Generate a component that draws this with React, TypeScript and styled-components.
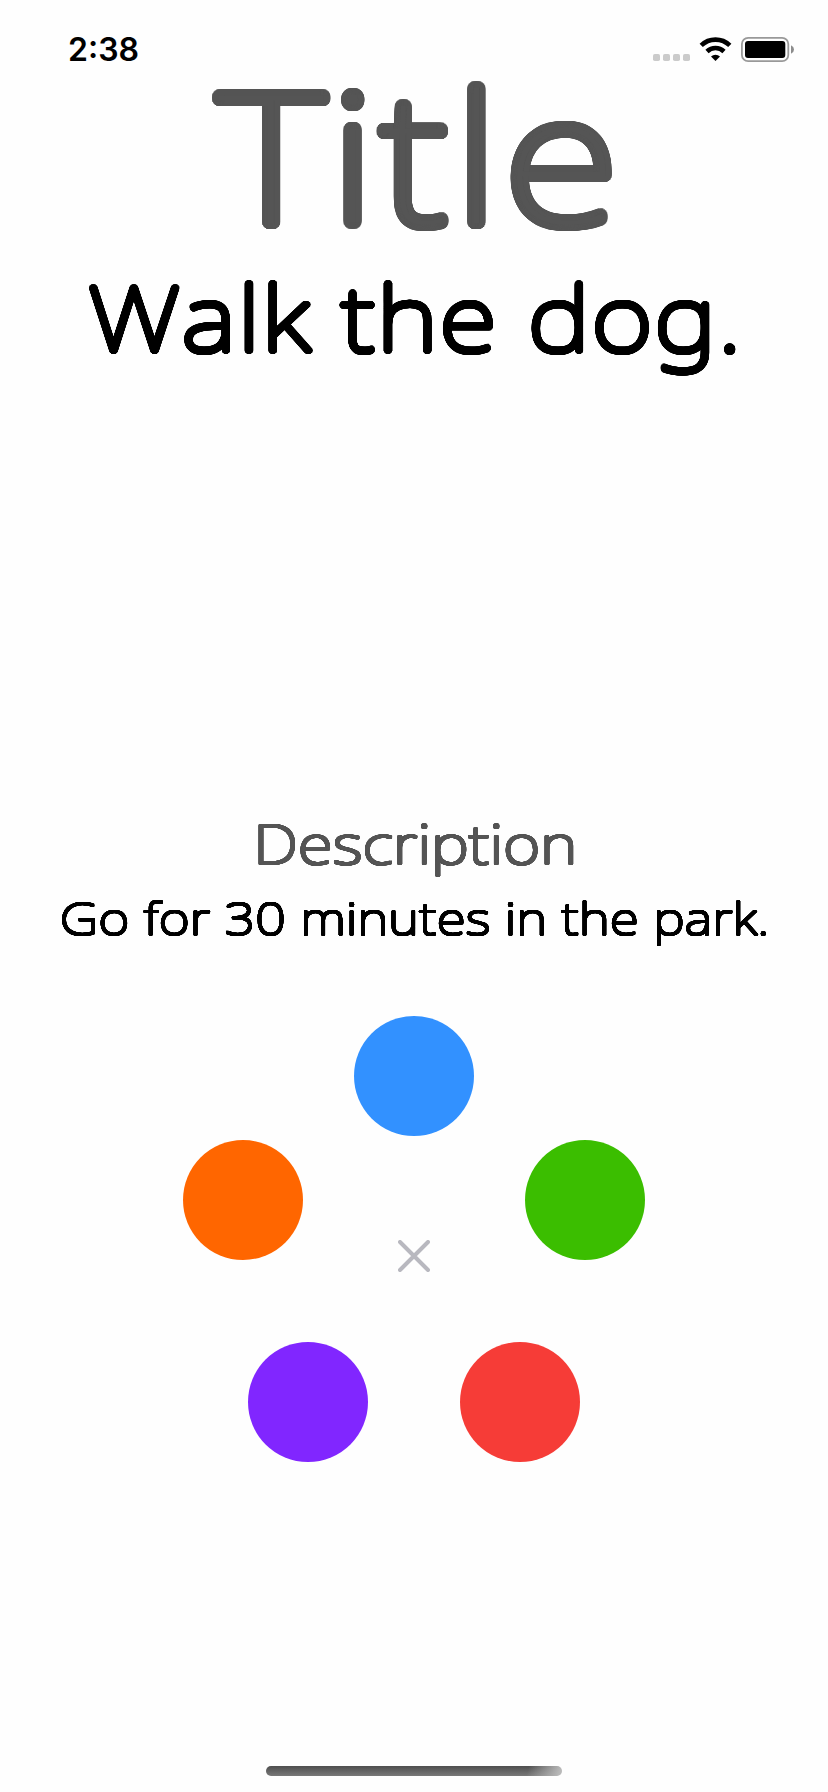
import React from 'react';
import styled, { createGlobalStyle } from 'styled-components';

const GlobalStyle = createGlobalStyle`
  * { box-sizing: border-box; }
  body { margin: 0; background: #fefefe; overflow: hidden; }
`;

const STRETCH = 1.18;

/* Grows a thin face evenly in every direction, which rounds its terminals. */
const roundedStroke = (radius: number) =>
  Array.from({ length: 48 }, (_, i) => {
    const angle = (i * Math.PI) / 24;
    const x = (Math.cos(angle) * radius) / STRETCH;
    const y = Math.sin(angle) * radius;
    return `${x.toFixed(2)}px ${y.toFixed(2)}px 0 currentColor`;
  }).join(', ');

const Screen = styled.main`
  display: flex;
  flex-direction: column;
  align-items: center;
  width: 828px;
  height: 1792px;
  background: #fefefe;
`;

const StatusBar = styled.header`
  display: flex;
  justify-content: space-between;
  align-items: flex-start;
  width: 100%;
  height: 88px;
  padding: 37px 34px 0 68px;
  flex: none;
`;

const Clock = styled.time`
  font: 600 32px/26px Inter, sans-serif;
  color: #000;
`;

const StatusIcons = styled.svg`
  display: block;
  width: 142px;
  height: 26px;
`;

interface LineProps {
  $size: number;
  $height: number;
  $radius: number;
  $tracking: number;
  $indent?: number;
  $muted?: boolean;
}

const Line = styled.div<LineProps>`
  flex: none;
  padding-left: ${(p) => p.$indent ?? 0}px;
  font-family: 'Noto Sans', sans-serif;
  font-weight: 100;
  font-kerning: none;
  font-size: ${(p) => p.$size}px;
  line-height: ${(p) => p.$height}px;
  letter-spacing: ${(p) => p.$tracking}px;
  color: ${(p) => (p.$muted ? '#555' : '#000')};
  text-shadow: ${(p) => roundedStroke(p.$radius)};
  transform: scaleX(${STRETCH});
  white-space: nowrap;
`;

const TitleSection = styled.section`
  display: flex;
  flex-direction: column;
  align-items: center;
  height: 723px;
`;

const DescriptionSection = styled.section`
  display: flex;
  flex-direction: column;
  align-items: center;
  height: 205px;
`;

const Wheel = styled.section`
  display: flex;
  flex-direction: column;
  align-items: center;
`;

const WheelRow = styled.div<{ $gap: number; $top: number }>`
  display: flex;
  justify-content: center;
  gap: ${(p) => p.$gap}px;
  margin-top: ${(p) => p.$top}px;
`;

const Dot = styled.button<{ $color: string }>`
  width: 120px;
  height: 120px;
  padding: 0;
  border: 0;
  border-radius: 50%;
  background: ${(p) => p.$color};
`;

const Close = styled.button`
  align-self: flex-end;
  width: 32px;
  height: 32px;
  margin-bottom: -12px;
  padding: 0;
  border: 0;
  background: none;

  svg { display: block; }
`;

const HomeIndicator = styled.div`
  width: 296px;
  height: 10px;
  margin: auto 0 16px;
  border-radius: 5px;
  background:
    linear-gradient(105deg, rgba(185, 185, 185, 0) 88%, #b9b9b9 99%),
    linear-gradient(#4e4e4e, #787878);
`;

export default function App() {
  return (
    <>
      <GlobalStyle />
      <Screen>
        <StatusBar>
          <Clock>2:38</Clock>
          <StatusIcons viewBox="0 0 142 26">
            <g fill="#cbcbcb">
              {[0, 10, 20, 30].map((x) => (
                <rect key={x} x={x + 1} y="17" width="7" height="7" rx="1.8" />
              ))}
            </g>
            <g fill="none" stroke="#000" strokeWidth="4.6">
              <path d="M49.2 8.4a20.5 20.5 0 0 1 28.6 0" />
              <path d="M55 14.5a12.2 12.2 0 0 1 17 0" />
            </g>
            <path d="M59 19.6a6.5 6.5 0 0 1 9 0L63.5 24z" fill="#000" />
            <rect x="89.9" y="0.9" width="46.4" height="23.2" rx="6.2" fill="none" stroke="#999" strokeWidth="1.8" />
            <rect x="93" y="4" width="40.3" height="17" rx="3" fill="#000" />
            <path d="M139 8.2q3 1.5 3 4.3t-3 4.3z" fill="#8c8c8c" />
          </StatusIcons>
        </StatusBar>

        <TitleSection>
          <Line $size={178.6} $height={132.6} $radius={6.2} $tracking={5.4} $indent={12} $muted>Title</Line>
          <Line $size={89.3} $height={191.4} $radius={2.8} $tracking={1.8} $indent={3}>Walk the dog.</Line>
        </TitleSection>

        <DescriptionSection>
          <Line $size={54} $height={65.6} $radius={1.45} $tracking={0.4} $indent={3} $muted>Description</Line>
          <Line $size={45} $height={82} $radius={1.15} $tracking={0.4} $indent={1}>Go for 30 minutes in the park.</Line>
        </DescriptionSection>

        <Wheel>
          <WheelRow $gap={0} $top={0}>
            <Dot $color="#3291ff" aria-label="Blue" />
          </WheelRow>
          <WheelRow $gap={95} $top={4}>
            <Dot $color="#ff6600" aria-label="Orange" />
            <Close aria-label="Close">
              <svg width="32" height="32" viewBox="0 0 32 32" stroke="#b8b8bf" strokeWidth="4" strokeLinecap="round">
                <path d="M2 2l28 28M30 2L2 30" />
              </svg>
            </Close>
            <Dot $color="#3bbe00" aria-label="Green" />
          </WheelRow>
          <WheelRow $gap={92} $top={82}>
            <Dot $color="#8126ff" aria-label="Purple" />
            <Dot $color="#f63c37" aria-label="Red" />
          </WheelRow>
        </Wheel>

        <HomeIndicator />
      </Screen>
    </>
  );
}
